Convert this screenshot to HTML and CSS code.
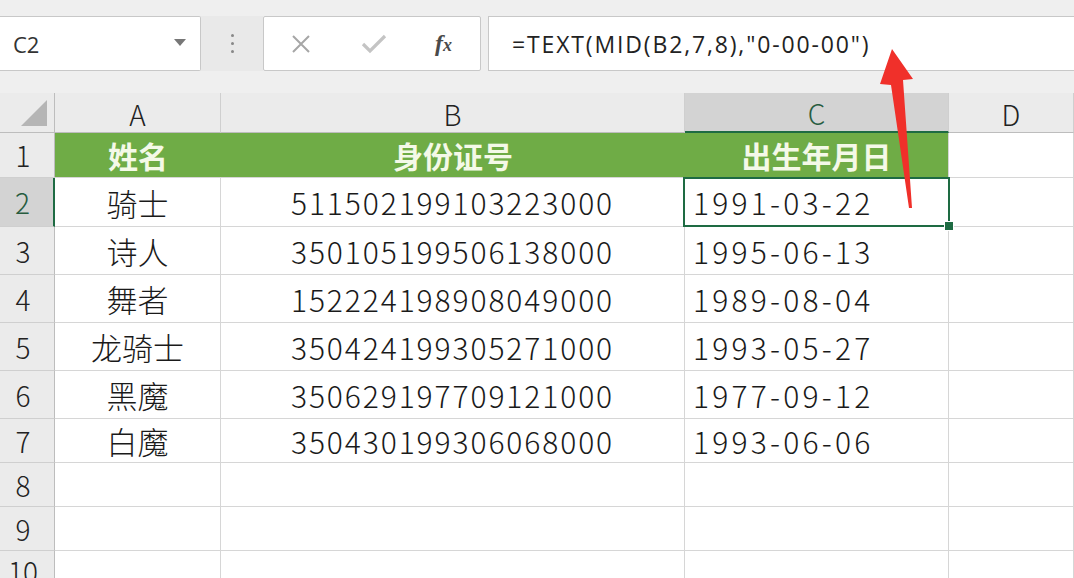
FILE: index.html
```html
<!DOCTYPE html>
<html lang="zh-CN">
<head>
  <meta charset="UTF-8">
  <title>出生年月日提取</title>
  <link rel="stylesheet" href="styles.css">
</head>
<body>
  <div class="sheet-window">
    <div class="formula-bar">
      <div class="name-box">
        <span>C2</span>
        <span class="caret"></span>
      </div>
      <div class="bar-sep">
        <span></span><span></span><span></span>
      </div>
      <div class="action-box">
        <svg class="icon" width="22" height="22" viewBox="0 0 22 22">
          <path d="M3 3 L19 19 M19 3 L3 19" stroke="#a6a6a6" stroke-width="2" fill="none"/>
        </svg>
        <svg class="icon" width="28" height="22" viewBox="0 0 28 22">
          <path d="M3 11 L10 18 L25 3" stroke="#c4c4c4" stroke-width="3.2" fill="none"/>
        </svg>
        <span class="fx">f<i>x</i></span>
      </div>
      <div class="formula-input">=TEXT(MID(B2,7,8),"0-00-00")</div>
    </div>

    <div class="grid">
      <div class="corner"><span class="corner-tri"></span></div>
      <div class="col-head">A</div>
      <div class="col-head">B</div>
      <div class="col-head selected">C</div>
      <div class="col-head">D</div>

      <div class="row-head">1</div>
      <div class="cell title">姓名</div>
      <div class="cell title">身份证号</div>
      <div class="cell title">出生年月日</div>
      <div class="cell"></div>

      <div class="row-head selected">2</div>
      <div class="cell center">骑士</div>
      <div class="cell center num">511502199103223000</div>
      <div class="cell date active">1991-03-22</div>
      <div class="cell"></div>

      <div class="row-head">3</div>
      <div class="cell center">诗人</div>
      <div class="cell center num">350105199506138000</div>
      <div class="cell date">1995-06-13</div>
      <div class="cell"></div>

      <div class="row-head">4</div>
      <div class="cell center">舞者</div>
      <div class="cell center num">152224198908049000</div>
      <div class="cell date">1989-08-04</div>
      <div class="cell"></div>

      <div class="row-head">5</div>
      <div class="cell center">龙骑士</div>
      <div class="cell center num">350424199305271000</div>
      <div class="cell date">1993-05-27</div>
      <div class="cell"></div>

      <div class="row-head">6</div>
      <div class="cell center">黑魔</div>
      <div class="cell center num">350629197709121000</div>
      <div class="cell date">1977-09-12</div>
      <div class="cell"></div>

      <div class="row-head">7</div>
      <div class="cell center">白魔</div>
      <div class="cell center num">350430199306068000</div>
      <div class="cell date">1993-06-06</div>
      <div class="cell"></div>

      <div class="row-head">8</div>
      <div class="cell"></div><div class="cell"></div><div class="cell"></div><div class="cell"></div>

      <div class="row-head">9</div>
      <div class="cell"></div><div class="cell"></div><div class="cell"></div><div class="cell"></div>

      <div class="row-head">10</div>
      <div class="cell"></div><div class="cell"></div><div class="cell"></div><div class="cell"></div>
    </div>

    <svg class="arrow" width="1074" height="578" viewBox="0 0 1074 578">
      <polygon points="892,49 913,79 903,80 912,208 909,208 891,85 880,84" fill="#f0302a"/>
    </svg>
  </div>
</body>
</html>
```

FILE: styles.css
```css
body {
  margin: 0;
  background-color: #efefef;
  font-family: "Noto Sans CJK SC", "Noto Sans", sans-serif;
  overflow: hidden;
}

.sheet-window {
  position: relative;
  width: 1074px;
  height: 578px;
  overflow: hidden;
}

/* formula bar */
.formula-bar {
  display: flex;
  align-items: center;
  height: 93px;
  padding-bottom: 6px;
  box-sizing: border-box;
}

.name-box {
  width: 201px;
  height: 55px;
  box-sizing: border-box;
  background: white;
  border: 1px solid #c8c8c8;
  border-left: none;
  border-radius: 0 2px 2px 0;
  display: flex;
  align-items: center;
  justify-content: space-between;
  padding: 0 14px 0 13px;
  font-family: "Open Sans", "Noto Sans", sans-serif;
  font-size: 22px;
  color: #333;
}

.caret {
  width: 0;
  height: 0;
  border-left: 6px solid transparent;
  border-right: 6px solid transparent;
  border-top: 7px solid #777;
  margin-top: -2px;
}

.bar-sep {
  width: 62px;
  height: 55px;
  background: #e9e9e9;
  display: flex;
  flex-direction: column;
  align-items: center;
  justify-content: center;
  gap: 5px;
}

.bar-sep span {
  width: 3px;
  height: 3px;
  border-radius: 50%;
  background: #888;
}

.action-box {
  width: 218px;
  height: 55px;
  box-sizing: border-box;
  background: white;
  border: 1px solid #c8c8c8;
  border-radius: 2px;
  display: flex;
  align-items: center;
  padding: 0 28px 0 26px;
  justify-content: space-between;
}

.fx {
  font-family: "Liberation Serif", serif;
  font-style: italic;
  font-weight: bold;
  font-size: 24px;
  color: #4a4a4a;
}

.fx i {
  font-size: 18px;
}

.formula-input {
  flex: 1;
  height: 55px;
  margin-left: 7px;
  box-sizing: border-box;
  background: white;
  border: 1px solid #c8c8c8;
  border-right: none;
  display: flex;
  align-items: center;
  padding-left: 23px;
  font-family: "Open Sans", "Noto Sans", sans-serif;
  font-size: 23px;
  letter-spacing: 1.85px;
  color: #222;
}

/* sheet grid */
.grid {
  display: grid;
  grid-template-columns: 55px 166px 464px 264px 125px;
  grid-template-rows: 40px 45px 49px 48px 48px 48px 48px 44px 44px 44px 40px;
}

.corner,
.col-head,
.row-head {
  background: #ebebeb;
  box-sizing: border-box;
  color: #222;
  display: flex;
  align-items: center;
  justify-content: center;
}

.corner {
  position: relative;
  border-right: 1px solid #bdbdbd;
  border-bottom: 1px solid #bdbdbd;
}

.corner-tri {
  position: absolute;
  right: 7px;
  bottom: 6px;
  width: 0;
  height: 0;
  border-left: 26px solid transparent;
  border-bottom: 26px solid #b5b5b5;
}

.col-head {
  font-size: 28px;
  font-weight: 300;
  border-right: 1px solid #cfcfcf;
  border-bottom: 1px solid #bdbdbd;
  padding-top: 2px;
}

.col-head.selected {
  background: #d3d3d3;
  color: #275c3f;
  border-bottom: 2px solid #1e6b43;
}

.row-head {
  font-size: 28px;
  font-weight: 300;
  padding-right: 8px;
  border-right: 1px solid #bdbdbd;
  border-bottom: 1px solid #cfcfcf;
}

.row-head.selected {
  background: #d3d3d3;
  color: #275c3f;
  border-right: 2px solid #1e6b43;
}

.cell {
  background: white;
  box-sizing: border-box;
  border-right: 1px solid #d6d6d6;
  border-bottom: 1px solid #d6d6d6;
  font-size: 31px;
  font-weight: 300;
  color: #1a1a1a;
  display: flex;
  align-items: center;
  white-space: nowrap;
}

.cell.center {
  justify-content: center;
}

.cell.num {
  font-size: 30px;
  letter-spacing: 1.9px;
}

.cell.title {
  background: #6fac46;
  color: #f4f9e8;
  font-weight: bold;
  justify-content: center;
  border-right: none;
  border-bottom: 1px solid #d6d6d6;
  font-size: 30px;
}

.cell.title:nth-child(9) {
  border-right: 1px solid #d6d6d6;
}

.cell.date {
  font-size: 30px;
  padding-left: 8px;
  letter-spacing: 3.2px;
}

.cell.active {
  position: relative;
}

.cell.active::after {
  content: "";
  position: absolute;
  left: -2px;
  top: -1px;
  right: -2px;
  bottom: -1px;
  border: 2px solid #1e6b43;
}

.cell.active::before {
  content: "";
  position: absolute;
  right: -6px;
  bottom: -5px;
  width: 8px;
  height: 8px;
  background: #1e6b43;
  border: 1px solid white;
  z-index: 1;
}

.arrow {
  position: absolute;
  left: 0;
  top: 0;
  pointer-events: none;
}
```
